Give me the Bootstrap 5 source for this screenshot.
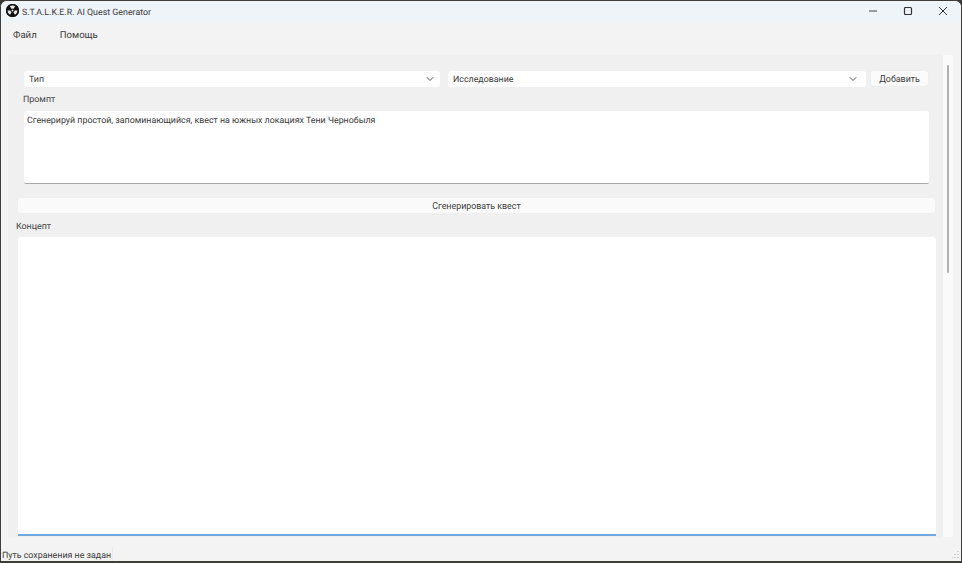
<!DOCTYPE html>
<html lang="ru">
<head>
<meta charset="utf-8">
<title>S.T.A.L.K.E.R. AI Quest Generator</title>
<link href="https://cdn.jsdelivr.net/npm/bootstrap@5.3.0/dist/css/bootstrap.min.css" rel="stylesheet">
<style>
html,body{height:100%;margin:0;background:#3a3835;overflow:hidden}
body{font-family:Roboto,"Noto Sans",sans-serif;font-size:8.85px;color:#3a3a3a;line-height:1.2;text-rendering:geometricPrecision}
.app-win{height:563px;width:962px;background:#f3f3f3;border:1px solid #3f3d3a;border-bottom-width:2px;border-radius:7px 7px 0 0;overflow:hidden}
.app-title{height:22px;background:#eff4f9;padding-left:5px;color:#3a3a3a;font-size:8.85px}
.app-logo{width:13px;height:13px;margin:-2px 3px 0 0}
.title-text{padding-top:2px}
.win-btn{width:35px;height:20px;margin-top:-2px}
.win-row{margin-right:1px}
.app-menu{height:32px;padding:0 0 6px 12px;gap:23px;font-size:9.6px;color:#3a3a3a}
.scroll-pane{height:483px;margin-left:7px;margin-right:8px;background:#fafafa;border-radius:4px}
.pane-body{width:935px;background:#f0f0f0;border-radius:4px 0 0 4px;padding:16px 0 0 0}
.top-fields{padding:0 0 0 16px}
.combo-box{height:16px;background:#fff;border-radius:3px;padding:2px 6px 0 5px;color:#3a3a3a}
.combo-chev{margin-top:-2px}
.combo-a{width:416px;margin-right:8px}
.combo-b{width:418px;margin-right:5px;padding-right:9px}
.add-btn{width:57px;height:15px;background:#fbfbfb;border:0;border-radius:3px;padding:1px 0 0;color:#3a3a3a;font-size:8.85px;box-shadow:0 0 0 .5px #ececec}
.field-label{height:24px;padding:8px 0 0 0;margin-left:-1px;color:#444}
.prompt-area{height:73px;width:905px;background:#fff;border-radius:3px 3px 2px 2px;border-bottom:1.5px solid #a8a8a8;padding:5px 3px 2px;color:#3a3a3a}
.gen-btn{width:917px;height:15px;margin:14px 0 0 10px;background:#fafafa;border:0;border-radius:3px;padding:1px 0 0;color:#3a3a3a;font-size:8.85px;box-shadow:0 0 0 .5px #ececec;display:block}
.label-two{padding:9px 0 0 8px;height:24px;color:#444}
.concept-area{width:918px;height:299px;margin-left:10px;background:#fff;border-radius:3px 3px 0 0;border-bottom:2px solid #70a9de}
.scroll-rail{width:10px}
.scroll-thumb{width:2px;height:208px;background:#b0b0b0;margin:10px 0 0 4px;border-radius:1px}
.status-line{height:24px;padding:0 1px 0 0}
.status-text{border-right:1px solid #e9e9e9;margin-top:10px;padding:4px 1px 0 1px}
.grip-mark{width:7px;height:7px;margin:14px 1px 0 0}
</style>
</head>
<body>
<div class="app-win d-flex flex-column">
  <div class="app-title d-flex align-items-center">
    <svg class="app-logo" viewBox="0 0 24 24"><circle cx="12" cy="12" r="12" fill="#111"/><path d="M12 12 6.3 2.9A10.5 10.5 0 0 1 17.7 2.9Z M12 12 22.5 12A10.5 10.5 0 0 1 17.2 21.1Z M12 12 6.8 21.1A10.5 10.5 0 0 1 1.5 12Z" fill="#e8e8e8"/><circle cx="12" cy="12" r="10.6" stroke="#111" stroke-width="3" fill="none"/><circle cx="12" cy="12" r="3.6" fill="#111"/><circle cx="12" cy="12" r="1.7" fill="#e8e8e8"/></svg>
    <span class="flex-grow-1 title-text">S.T.A.L.K.E.R. AI Quest Generator</span>
    <div class="d-flex win-row">
      <div class="win-btn d-flex align-items-center justify-content-center"><svg width="10" height="10" viewBox="0 0 10 10"><path d="M1 5H9" stroke="#444" fill="none"/></svg></div>
      <div class="win-btn d-flex align-items-center justify-content-center"><svg width="10" height="10" viewBox="0 0 10 10"><rect x="1.5" y="1.5" width="7" height="7" rx="1" stroke="#333" stroke-width="1.2" fill="none"/></svg></div>
      <div class="win-btn d-flex align-items-center justify-content-center"><svg width="10" height="10" viewBox="0 0 10 10"><path d="M1 1 9 9M9 1 1 9" stroke="#333" fill="none"/></svg></div>
    </div>
  </div>
  <div class="app-menu d-flex align-items-center"><span>Файл</span><span>Помощь</span></div>
  <div class="scroll-pane d-flex">
    <div class="pane-body">
      <div class="top-fields">
        <div class="d-flex align-items-center">
          <div class="combo-box combo-a d-flex align-items-center justify-content-between"><span>Тип</span><svg class="combo-chev" width="8" height="6" viewBox="0 0 8 6"><path d="M.7 1.2 4 4.5 7.3 1.2" stroke="#555" fill="none"/></svg></div>
          <div class="combo-box combo-b d-flex align-items-center justify-content-between"><span>Исследование</span><svg class="combo-chev" width="8" height="6" viewBox="0 0 8 6"><path d="M.7 1.2 4 4.5 7.3 1.2" stroke="#555" fill="none"/></svg></div>
          <button class="add-btn" type="button">Добавить</button>
        </div>
        <div class="field-label">Промпт</div>
        <div class="prompt-area">Сгенерируй простой, запоминающийся, квест на южных локациях Тени Чернобыля</div>
      </div>
      <button class="gen-btn" type="button">Сгенерировать квест</button>
      <div class="label-two">Концепт</div>
      <div class="concept-area"></div>
    </div>
    <div class="scroll-rail"><div class="scroll-thumb"></div></div>
  </div>
  <div class="status-line d-flex justify-content-between"><span class="status-text">Путь сохранения не задан</span><svg class="grip-mark" viewBox="0 0 7 7"><path d="M6 0v1M6 3v1M6 6v1M3 3v1M3 6v1M0 6v1" stroke="#aaa" fill="none"/></svg></div>
</div>
</body>
</html>
